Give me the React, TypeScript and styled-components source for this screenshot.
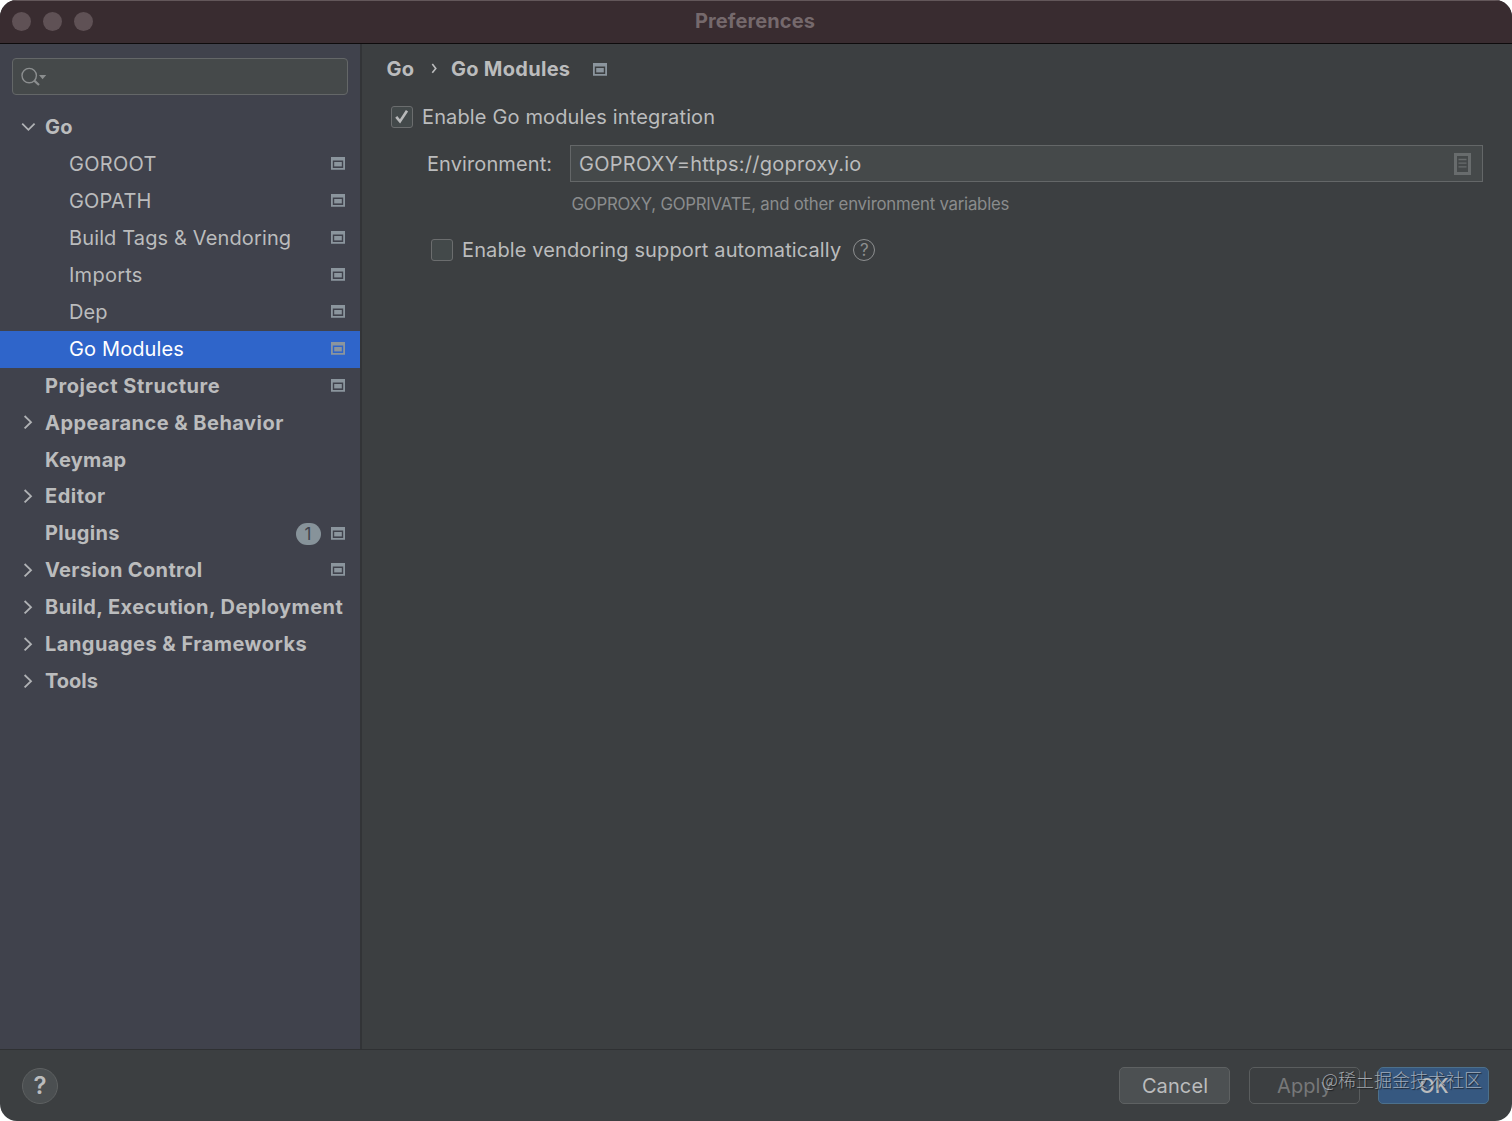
import React from "react";
import styled, { createGlobalStyle } from "styled-components";

const GlobalStyle = createGlobalStyle`
  * { box-sizing: border-box; }
  html, body { margin: 0; padding: 0; background: #ffffff; }
  body { font-family: Inter, "Liberation Sans", "Noto Sans CJK SC", sans-serif; }
`;

const Window = styled.div`
  width: 1512px;
  height: 1121px;
  display: flex;
  flex-direction: column;
  border-radius: 17px;
  overflow: hidden;
  background: #3c3f41;
  color: #bbbcbd;
  font-size: 20px;
  letter-spacing: 0.14px;
  white-space: nowrap;
`;

const TitleBar = styled.header`
  height: 44px;
  flex: none;
  display: grid;
  grid-template-columns: 1fr auto 1fr;
  align-items: center;
  padding: 0 12px 2px;
  background: #392c30;
  border-top: 1px solid #63575a;
  border-bottom: 1px solid #0e0b0c;
`;

const Lights = styled.div`
  display: flex;
  gap: 12px;
`;

const Light = styled.span`
  width: 19px;
  height: 19px;
  border-radius: 50%;
  background: #5f5155;
`;

const Title = styled.h1`
  margin: 0;
  font-size: 20px;
  font-weight: 700;
  letter-spacing: 0.1px;
  color: #75696c;
  transform: translateX(-1px);
`;

const Body = styled.div`
  flex: 1;
  display: flex;
  min-height: 0;
`;

const Sidebar = styled.aside`
  width: 362px;
  flex: none;
  background: #40424c;
  border-right: 2px solid #323437;
  padding-top: 14.4px;
`;

const Search = styled.div`
  width: 336px;
  height: 37px;
  margin: 0 0 13.6px 12px;
  padding-left: 8px;
  display: flex;
  align-items: center;
  border: 1.5px solid #646768;
  border-radius: 4px;
  background: #45494a;
`;

const Row = styled.div<{ $selected?: boolean; $child?: boolean }>`
  height: 36.95px;
  display: flex;
  align-items: center;
  padding: 0 15px 1.5px ${(p) => (p.$child ? 69 : 21)}px;
  background: ${(p) => (p.$selected ? "#2f65ca" : "transparent")};
  color: ${(p) => (p.$selected ? "#ffffff" : "#bbbcbd")};
  font-weight: ${(p) => (p.$child ? 400 : 700)};
`;

const Arrow = styled.span`
  width: 24px;
  display: flex;
`;

const Label = styled.span<{ $track: number }>`
  flex: 1;
  padding-top: 0.8px;
  letter-spacing: ${(p) => p.$track}px;
`;

const Badge = styled.span`
  width: 25px;
  height: 22px;
  margin: 2px 10.5px 0 0;
  border-radius: 11px;
  display: flex;
  align-items: center;
  justify-content: center;
  background: #87939a;
  color: #40424c;
  font-size: 17px;
  font-weight: 400;
  letter-spacing: 0;
`;

const Content = styled.main`
  flex: 1;
  padding: 6px 29px 0 24.5px;
`;

const Crumbs = styled.nav`
  height: 37px;
  display: flex;
  align-items: center;
  font-weight: 700;
`;

const Crumb = styled.span<{ $width: number; $track: number }>`
  width: ${(p) => p.$width}px;
  padding-top: 0.5px;
  letter-spacing: ${(p) => p.$track}px;
`;

const CrumbArrow = styled.span`
  width: 20px;
  display: flex;
`;

const CrumbIcon = styled.span`
  display: flex;
  padding-top: 1px;
`;

const Line = styled.div<{ $indent: number; $top: number; $height: number }>`
  display: flex;
  align-items: center;
  height: ${(p) => p.$height}px;
  margin-top: ${(p) => p.$top}px;
  padding-left: ${(p) => p.$indent}px;
`;

const Check = styled.span`
  width: 22px;
  height: 22px;
  margin-right: 9px;
  display: flex;
  border: 1.5px solid #6b6d6e;
  border-radius: 3px;
  background: #43494a;
`;

const Text = styled.span<{ $track?: number; $drop?: number }>`
  padding-top: ${(p) => p.$drop ?? 0}px;
  letter-spacing: ${(p) => p.$track ?? 0.14}px;
`;

const FieldLabel = styled.label`
  width: 143px;
  letter-spacing: 0.1px;
`;

const Field = styled.div`
  flex: 1;
  height: 37px;
  display: flex;
  align-items: center;
  justify-content: space-between;
  padding: 0 11.5px 0 8px;
  border: 1.5px solid #646768;
  background: #45494a;
`;

const Hint = styled.p`
  margin: 11px 0 0 185px;
  height: 22px;
  line-height: 22px;
  font-size: 16.8px;
  letter-spacing: -0.23px;
  color: #8a8c8d;
`;

const HelpMark = styled.span`
  width: 22px;
  height: 22px;
  margin-left: 12px;
  display: flex;
  align-items: center;
  justify-content: center;
  border: 1.5px solid #8d8f90;
  border-radius: 50%;
  color: #8d8f90;
  font-size: 17px;
  letter-spacing: 0;
`;

const Footer = styled.footer`
  height: 72px;
  flex: none;
  display: flex;
  align-items: center;
  gap: 18.5px;
  padding: 0 23px 0 22px;
  border-top: 1.5px solid #2f3133;
  position: relative;
`;

const HelpButton = styled.button`
  width: 36px;
  height: 36px;
  margin: 0 auto 0 0;
  padding: 0;
  border: 1px solid #5e6162;
  border-radius: 50%;
  background: #4b4f51;
  color: #bbbcbd;
  font: 600 24px Inter, sans-serif;
`;

const Button = styled.button<{ $kind?: "primary" | "disabled" }>`
  width: 111px;
  height: 37.5px;
  padding: 1px 0 0 1px;
  border: 1.5px solid ${(p) => (p.$kind === "primary" ? "#4c708c" : p.$kind === "disabled" ? "#5a5d5e" : "#5e6162")};
  border-radius: 5px;
  background: ${(p) => (p.$kind === "primary" ? "#365880" : p.$kind === "disabled" ? "transparent" : "#4c5052")};
  color: ${(p) => (p.$kind === "disabled" ? "#777879" : "#bbbcbd")};
  font: ${(p) => (p.$kind === "primary" ? 500 : 400)} 20px Inter, sans-serif;
  letter-spacing: 0.1px;
`;

const Watermark = styled.span`
  position: absolute;
  left: 1321.5px;
  top: 16px;
  font: 300 18px/26px "Noto Sans CJK SC", sans-serif;
  letter-spacing: 0;
  color: rgba(205, 210, 216, 0.72);
  text-shadow: 1px 1px 1px rgba(20, 22, 26, 0.8);
`;

const PanelIcon = () => (
  <svg width="14" height="13" viewBox="0 0 14 13">
    <path fillRule="evenodd" fill="#8b959d" d="M0 0H14V12.8H0ZM1.8 3.5V11H12.2V3.5Z" />
    <path fill="#8b959d" d="M3.2 5H10.8V9.4H3.2Z" />
  </svg>
);

const SearchIcon = () => (
  <svg width="27" height="22" viewBox="0 0 27 22" fill="none">
    <circle cx="8.2" cy="9.6" r="7.2" stroke="#8b8e8f" strokeWidth="1.4" />
    <path d="M13.3 14.6L18 19" stroke="#8b8e8f" strokeWidth="2.2" />
    <path d="M18 9H25.2L21.6 13.2Z" fill="#8b8e8f" />
  </svg>
);

const Chevron = ({ open }: { open?: boolean }) => (
  <svg width="15" height="14" viewBox="0 0 15 14" fill="none" stroke="#b0b2b5" strokeWidth="1.8">
    {open ? <path d="M1.2 3.6L7.4 9.8L13.6 3.6" /> : <path d="M3.6 1L10 7.2L3.6 13.4" />}
  </svg>
);

const Tick = () => (
  <svg width="19" height="19" viewBox="0 0 19 19" fill="none">
    <path d="M4.2 9.8L8 14.4L15 3.8" stroke="#b8b9ba" strokeWidth="2.6" />
  </svg>
);

const ListIcon = () => (
  <svg width="17" height="22" viewBox="0 0 17 22">
    <path fillRule="evenodd" fill="#686c6d" d="M0 0H17V22H0ZM3 3V19H14V3Z" />
    <path d="M4.5 6.5H12.5M4.5 10.2H12.5M4.5 13.9H12.5" stroke="#686c6d" strokeWidth="1.3" />
  </svg>
);

type Item = {
  text: string;
  child?: boolean;
  selected?: boolean;
  arrow?: "open" | "closed";
  panel?: boolean;
  badge?: number;
  track?: number;
};

const items: Item[] = [
  { text: "Go", arrow: "open" },
  { text: "GOROOT", child: true, panel: true, track: 0.3 },
  { text: "GOPATH", child: true, panel: true, track: 0.2 },
  { text: "Build Tags & Vendoring", child: true, panel: true },
  { text: "Imports", child: true, panel: true, track: 0.25 },
  { text: "Dep", child: true, panel: true, track: 0.1 },
  { text: "Go Modules", child: true, panel: true, selected: true },
  { text: "Project Structure", panel: true, track: 0.53 },
  { text: "Appearance & Behavior", arrow: "closed", track: 0.46 },
  { text: "Keymap" },
  { text: "Editor", arrow: "closed", track: 0.5 },
  { text: "Plugins", badge: 1, panel: true },
  { text: "Version Control", arrow: "closed", panel: true, track: 0.37 },
  { text: "Build, Execution, Deployment", arrow: "closed", track: 0.44 },
  { text: "Languages & Frameworks", arrow: "closed", track: 0.48 },
  { text: "Tools", arrow: "closed", track: 0 },
];

export default function App() {
  return (
    <>
      <GlobalStyle />
      <Window>
        <TitleBar>
          <Lights>
            <Light />
            <Light />
            <Light />
          </Lights>
          <Title>Preferences</Title>
        </TitleBar>
        <Body>
          <Sidebar>
            <Search>
              <SearchIcon />
            </Search>
            {items.map((item) => (
              <Row key={item.text} $child={item.child} $selected={item.selected}>
                {!item.child && <Arrow>{item.arrow && <Chevron open={item.arrow === "open"} />}</Arrow>}
                <Label $track={item.track ?? (item.child ? 0.13 : 0.3)}>{item.text}</Label>
                {item.badge && <Badge>{item.badge}</Badge>}
                {item.panel && <PanelIcon />}
              </Row>
            ))}
          </Sidebar>
          <Content>
            <Crumbs>
              <Crumb $width={44.5} $track={0.2}>Go</Crumb>
              <CrumbArrow>
                <svg width="7" height="11" viewBox="0 0 7 11" fill="none">
                  <path d="M1.3 1L4.8 5.4L1.3 9.8" stroke="#bbbcbd" strokeWidth="1.6" />
                </svg>
              </CrumbArrow>
              <Crumb $width={142} $track={0.28}>Go Modules</Crumb>
              <CrumbIcon>
                <PanelIcon />
              </CrumbIcon>
            </Crumbs>
            <Line $indent={4.5} $top={11} $height={37}>
              <Check>
                <Tick />
              </Check>
              <Text $drop={1.5}>Enable Go modules integration</Text>
            </Line>
            <Line $indent={40.5} $top={10} $height={37}>
              <FieldLabel>Environment:</FieldLabel>
              <Field>
                <Text $track={0.27}>GOPROXY=https://goproxy.io</Text>
                <ListIcon />
              </Field>
            </Line>
            <Hint>GOPROXY, GOPRIVATE, and other environment variables</Hint>
            <Line $indent={44.5} $top={16} $height={37}>
              <Check />
              <Text $track={0.12}>Enable vendoring support automatically</Text>
              <HelpMark>?</HelpMark>
            </Line>
          </Content>
        </Body>
        <Footer>
          <HelpButton>?</HelpButton>
          <Button>Cancel</Button>
          <Button $kind="disabled">Apply</Button>
          <Button $kind="primary">OK</Button>
          <Watermark>@稀土掘金技术社区</Watermark>
        </Footer>
      </Window>
    </>
  );
}
